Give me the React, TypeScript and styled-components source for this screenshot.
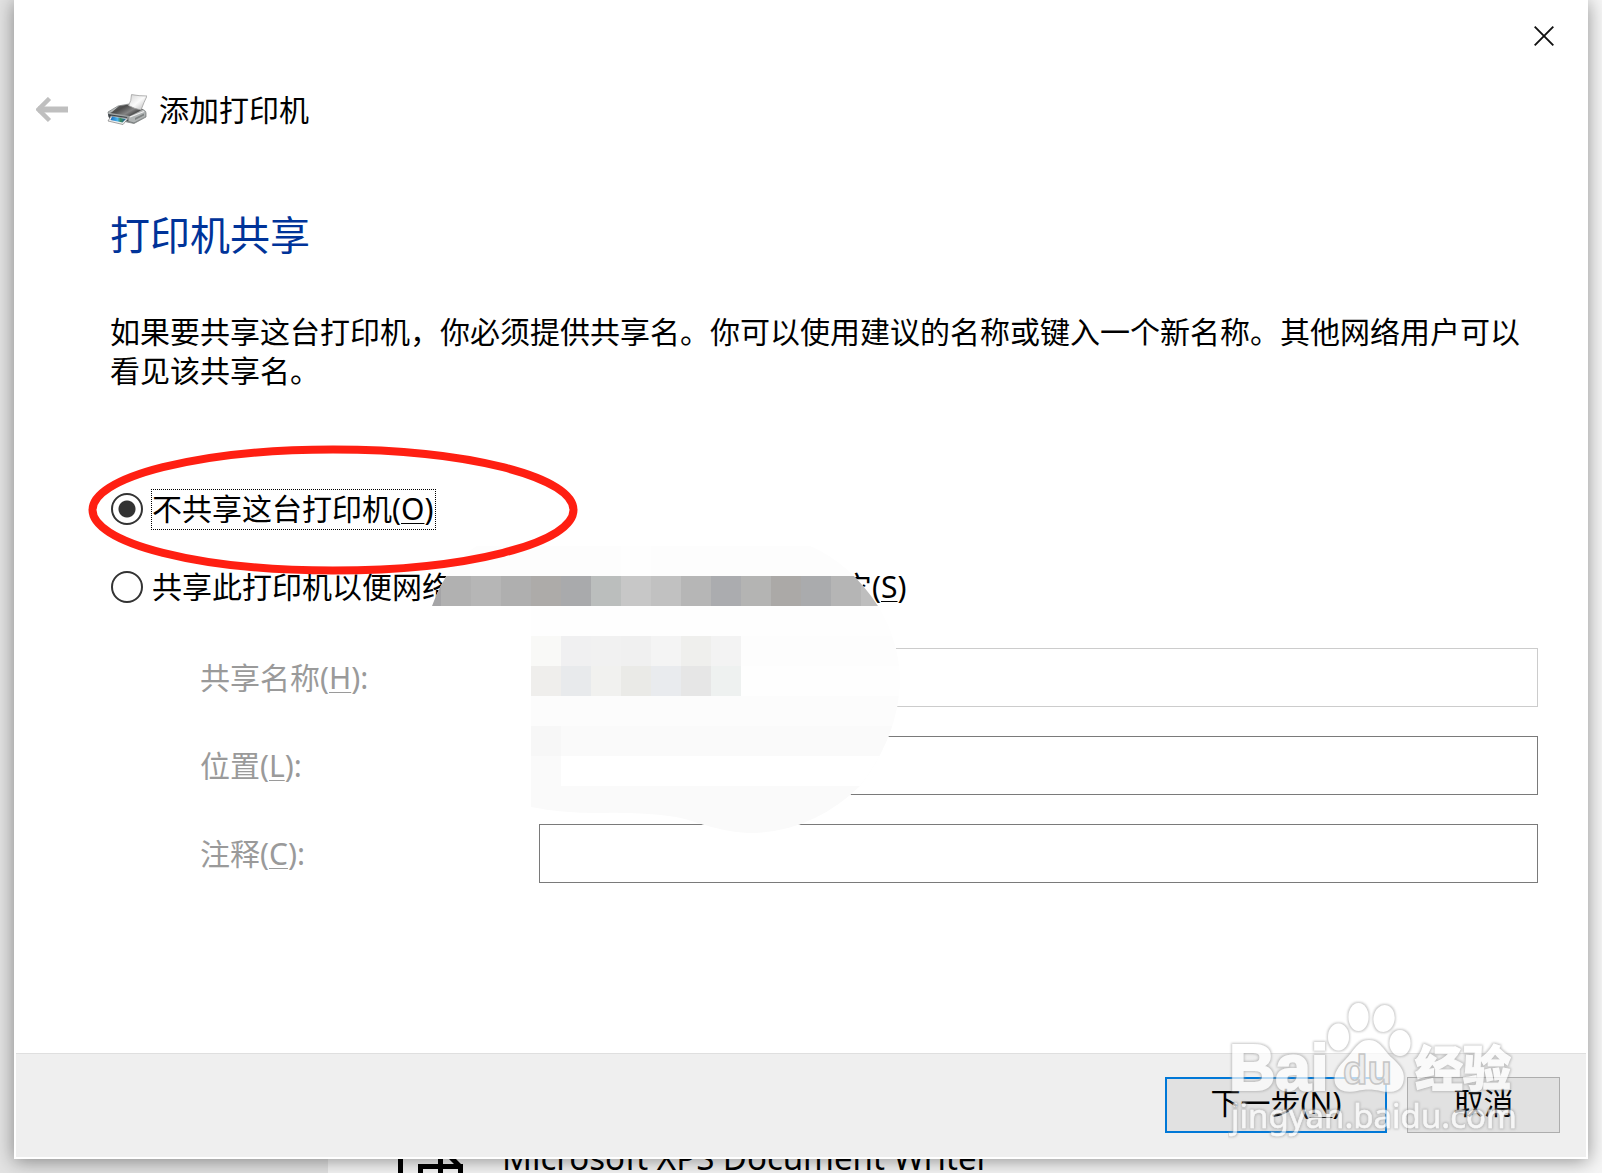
import React, { useState } from 'react';
import styled, { createGlobalStyle, css } from 'styled-components';

const GlobalStyle = createGlobalStyle`
  *, *::before, *::after { box-sizing: border-box; }
  body {
    margin: 0;
    background: #f6f6f6;
    color: #000;
    font-family: 'Noto Sans', 'Noto Sans CJK SC', sans-serif;
    font-size: 30px;
  }
  button, input { font: inherit; color: inherit; }
`;

const Desktop = styled.div`
  display: grid;
  height: 100vh;
  min-height: 900px;
  overflow: hidden;
`;

const Backdrop = styled.div`
  grid-area: 1 / 1;
  display: flex;
  min-height: 0;
`;

const Sidebar = styled.div`
  width: 328px;
  background: #e3e3e3;
`;

const DeviceList = styled.div`
  flex: 1;
  display: flex;
  align-items: flex-end;
  background: #f6f6f6;
`;

const Device = styled.div`
  display: flex;
  align-items: flex-end;
  gap: 38px;
  height: 36px;
  padding-left: 70px;
`;

const DeviceName = styled.span`
  height: 36px;
  font-size: 33px;
  line-height: 42px;
  white-space: nowrap;
`;

const Dialog = styled.main`
  grid-area: 1 / 1;
  position: relative;
  display: flex;
  flex-direction: column;
  margin: 0 14px 14px;
  background: #fff;
  box-shadow: 0 2px 18px rgba(0, 0, 0, 0.42);
`;

const CaptionBar = styled.div`
  display: flex;
  justify-content: flex-end;
`;

const IconButton = styled.button`
  display: flex;
  align-items: center;
  justify-content: center;
  padding: 0;
  border: 0;
  background: none;
`;

const CloseButton = styled(IconButton)`
  width: 88px;
  height: 72px;
`;

const TitleBar = styled.header`
  display: flex;
  align-items: center;
  height: 75px;
  padding-left: 22px;
`;

const TitleText = styled.span`
  margin-left: 12px;
  line-height: 40px;
`;

const PrinterArt = styled.svg`
  margin-left: 39px;
`;

const Content = styled.section`
  flex: 1;
  padding: 60px 50px 0 96px;
`;

const Heading = styled.h1`
  margin: 0;
  color: #003399;
  font-size: 40px;
  font-weight: 400;
  line-height: 56px;
`;

const Description = styled.p`
  margin: 49px 0 0;
  line-height: 39px;
`;

const Choices = styled.div`
  display: grid;
  gap: 38px;
  margin-top: 99px;
`;

const Choice = styled.div`
  display: flex;
  align-items: center;
  height: 40px;
`;

const Radio = styled.input`
  appearance: none;
  flex: none;
  width: 32px;
  height: 32px;
  margin: 0 8px 0 1px;
  border: 2px solid #333;
  border-radius: 50%;
  background: #fff;
  outline: 0;
  &:checked {
    background: radial-gradient(circle, #333 0 8px, #fff 9px);
  }
`;

const ChoiceLabel = styled.label<{ $focused?: boolean }>`
  height: 41px;
  padding-right: 2px;
  border: 1px dotted transparent;
  line-height: 38px;
  white-space: nowrap;
  ${(p) => p.$focused && css`border-color: #000;`}
`;

const Key = styled.span`
  text-decoration: underline;
  text-decoration-thickness: 1px;
  text-underline-offset: 3px;
`;

const Fields = styled.div`
  display: grid;
  gap: 29px;
  margin-top: 41px;
  padding-left: 90px;
`;

const Field = styled.div`
  display: grid;
  grid-template-columns: 339px 1fr;
  align-items: center;
`;

const FieldLabel = styled.label`
  color: #9a9a9a;
  line-height: 40px;
`;

const TextBox = styled.input`
  width: 100%;
  height: 59px;
  padding: 0 10px;
  border: 1px solid #7a7a7a;
  border-radius: 0;
  background: #fff;
  &:disabled { border-color: #ccc; }
`;

const Footer = styled.footer`
  display: flex;
  justify-content: flex-end;
  gap: 20px;
  margin: 0 2px 2px;
  padding: 23px 26px 24px;
  border-top: 1px solid #dfdfdf;
  background: #efefef;
`;

const PushButton = styled.button<{ $primary?: boolean }>`
  width: ${(p) => (p.$primary ? 222 : 153)}px;
  height: 56px;
  padding: 0 0 4px;
  border: ${(p) => (p.$primary ? '2px solid #0078d7' : '1px solid #adadad')};
  background: #e1e1e1;
  line-height: 40px;
`;

const Annotation = styled.svg`
  position: absolute;
  top: 0;
  left: 0;
  pointer-events: none;
`;

const Watermark = styled.svg`
  position: absolute;
  right: 60px;
  bottom: 15px;
  pointer-events: none;
`;

const BackIcon = () => (
  <svg width="32" height="26" viewBox="0 0 32 26" fill="none" stroke="#bfbfbf">
    <path d="M2 12.500H32" strokeWidth="6" />
    <path d="M13.500 1.500L2.500 12.500L13.500 23.500" strokeWidth="4.500" />
  </svg>
);

const CloseIcon = () => (
  <svg width="20" height="20" viewBox="0 0 20 20" stroke="#111" strokeWidth="1.900">
    <path d="M.7.700L19.300 19.300M19.300.700L.7 19.300" />
  </svg>
);

const PrinterIcon = () => (
  <PrinterArt width="40" height="31" viewBox="0 0 40 31">
    <defs>
      <linearGradient id="paper" x1="0" y1="0" x2="1" y2="1">
        <stop offset="0" stopColor="#d4d4d4" />
        <stop offset=".5" stopColor="#fbfbfb" />
        <stop offset="1" stopColor="#b4b4b4" />
      </linearGradient>
      <linearGradient id="lid" x1="0" y1="0" x2="1" y2=".6">
        <stop offset="0" stopColor="#6e6e6e" />
        <stop offset=".4" stopColor="#4c4c4c" />
        <stop offset=".7" stopColor="#858585" />
        <stop offset="1" stopColor="#2e2e2e" />
      </linearGradient>
      <linearGradient id="side" x1="0" y1="0" x2="0" y2="1">
        <stop offset="0" stopColor="#dcdede" />
        <stop offset="1" stopColor="#747979" />
      </linearGradient>
      <linearGradient id="photo" x1="0" y1="0" x2="1" y2="0">
        <stop offset="0" stopColor="#1666b8" />
        <stop offset=".45" stopColor="#49b4ee" />
        <stop offset=".65" stopColor="#3b8c5d" />
        <stop offset="1" stopColor="#1c5ca8" />
      </linearGradient>
    </defs>
    <path d="M1 18L11 12L22 10L37 16Q39 17 39 19V23L27 29.500L20 28L2 23Z" fill="url(#side)" stroke="#808484" strokeWidth=".8" />
    <path d="M5 18L12 12L22 10.500L36 15.500L23 22L3 19Z" fill="url(#lid)" />
    <path d="M24.500.600Q32 2 40 2Q37 8 34 16Q28 15 21.500 11.500Q24.500 7 24.500.600Z" fill="url(#paper)" stroke="#a0a0a0" strokeWidth=".8" />
    <path d="M22 23L38 16.500V22.500L27 28.500L22 27Z" fill="#b0b4b4" />
    <path d="M23 23L37 17.500" stroke="#f0f0f0" strokeWidth="1.200" />
    <path d="M28 24L37 19.500V21.500L28 26Z" fill="#7e8282" />
    <path d="M1 20L20 23L21 27L2 24Z" fill="#3b4248" />
    <path d="M4 22L21 24.500L16 30.500L1 27Z" fill="#f0f0f0" stroke="#8a8a8a" strokeWidth=".8" />
    <path d="M5 22.500L19 25L15.500 28.500L3.500 26Z" fill="url(#photo)" />
  </PrinterArt>
);

const GhostPrinter = () => (
  <svg width="66" height="14" viewBox="0 0 66 14" fill="#000">
    <path d="M0 0H5V14H0ZM20 5H65V14H60V10H25V14H20ZM40 0H45V14H40ZM51 0H58L64 6H57Z" />
  </svg>
);

const CELL = 30;
const textRow = ['#a5a5a7', '#b1b1b1', '#b6b6b6', '#afafaf', '#adaba9', '#a9aaac', '#bbbebd', '#c7c7c7', '#c1c1c1', '#b6b6b6', '#abacaf', '#b4b4b3', '#aba9a7', '#aaabad', '#b5b5b5', '#bebebe'];
const nameRows = [
  ['#f9f9f7', '#f0f0f1', '#f1f1f1', '#f0f0f0', '#f4f4f4', '#efefed', '#f3f3f3'],
  ['#efeeec', '#e8eaec', '#f1f1ef', '#eaeae7', '#e9ebee', '#e6e6e6', '#eef1f0'],
];

/* Pixelated patch over the private values, and the red ring round the first choice. */
const Markup = () => (
  <Annotation width="930" height="850" viewBox="14 0 930 850">
    <defs>
      <clipPath id="brush">
        <path d="M432 606Q448 562 477 546H810Q850 563 878 606Q899 640 900 680Q899 735 860 786Q815 830 755 833C720 833 700 822 676 817Q640 812 600 813Q560 813 531 807V606Z" />
      </clipPath>
    </defs>
    <g clipPath="url(#brush)" shapeRendering="crispEdges">
      <rect x="420" y="546" width="490" height="300" fill="#fefefe" />
      <rect x="420" y="546" width="201" height="30" fill="#fdfdfd" />
      <rect x="651" y="546" width="250" height="30" fill="#fdfdfd" />
      {textRow.map((fill, i) => (
        <rect key={i} x={411 + i * CELL} y="576" width={CELL} height={CELL} fill={fill} />
      ))}
      <rect x="741" y="636" width="170" height="30" fill="#fdfdfd" />
      {nameRows.map((row, r) =>
        row.map((fill, i) => (
          <rect key={`${r}-${i}`} x={531 + i * CELL} y={636 + r * CELL} width={CELL} height={CELL} fill={fill} />
        )),
      )}
      <rect x="531" y="696" width="380" height="30" fill="#fcfcfc" />
      <rect x="531" y="726" width="380" height="120" fill="#fafafa" />
      <rect x="531" y="726" width="30" height="30" fill="#f7f7f7" />
      <rect x="561" y="756" width="350" height="30" fill="#fff" />
    </g>
    <ellipse cx="333" cy="510" rx="240.500" ry="60.500" fill="none" stroke="#ff1f12" strokeWidth="8" />
  </Annotation>
);

const BaiduMark = () => (
  <Watermark width="300" height="150" viewBox="1228 994 300 150">
    <defs>
      <filter id="halo" x="-5%" y="-10%" width="110%" height="120%">
        <feMorphology in="SourceAlpha" operator="dilate" radius="1" result="wide" />
        <feGaussianBlur in="wide" stdDeviation=".8" result="soft" />
        <feFlood floodColor="#a0a0a0" floodOpacity=".8" />
        <feComposite in2="soft" operator="in" result="edge" />
        <feMerge>
          <feMergeNode in="edge" />
          <feMergeNode in="SourceGraphic" />
        </feMerge>
      </filter>
    </defs>
    <g filter="url(#halo)" opacity=".72" fill="#fff">
      <ellipse cx="1338.500" cy="1037" rx="10.500" ry="13.500" />
      <ellipse cx="1358.500" cy="1017" rx="10" ry="14" />
      <ellipse cx="1384" cy="1018.500" rx="10.500" ry="13.500" transform="rotate(8 1384 1019)" />
      <ellipse cx="1400" cy="1043" rx="10.500" ry="13" />
      <path d="M1369 1040C1380 1040 1384 1051 1392 1058C1401 1066 1406 1073 1403 1083C1400 1092 1391 1093 1381 1091C1373 1089 1364 1089 1357 1091C1346 1093 1338 1091 1335 1083C1333 1073 1339 1066 1346 1059C1354 1051 1358 1040 1369 1040Z" />
      <text x="1229" y="1090" fontFamily="Liberation Sans, sans-serif" fontWeight="700" fontSize="64" stroke="#fff" strokeWidth="2">Bai</text>
      <text x="1415" y="1086" fontFamily="Noto Sans CJK SC, sans-serif" fontWeight="900" fontSize="48" stroke="#fff" strokeWidth="1">经验</text>
    </g>
    <g filter="url(#halo)" opacity=".7" fill="#fff">
      <text x="1231" y="1128" fontFamily="Noto Sans, sans-serif" fontSize="33" stroke="#fff" strokeWidth=".5">jingyan.baidu.com</text>
    </g>
    <text x="1343" y="1084" fontFamily="Liberation Sans, sans-serif" fontWeight="700" fontSize="40" fill="#ededed" stroke="#c6c6c6" strokeWidth="1.500">du</text>
  </Watermark>
);

const FIELDS = [
  { id: 'share-name', text: '共享名称', hotkey: 'H', disabled: true },
  { id: 'location', text: '位置', hotkey: 'L', disabled: false },
  { id: 'comment', text: '注释', hotkey: 'C', disabled: false },
];

const CHOICES = [
  { id: 'no-share', text: '不共享这台打印机', hotkey: 'O' },
  { id: 'share', text: '共享此打印机以便网络中的其他用户可以找到并使用它', hotkey: 'S' },
];

export default function App() {
  const [choice, setChoice] = useState('no-share');

  return (
    <>
      <GlobalStyle />
      <Desktop>
        <Backdrop>
          <Sidebar />
          <DeviceList>
            <Device>
              <GhostPrinter />
              <DeviceName>Microsoft XPS Document Writer</DeviceName>
            </Device>
          </DeviceList>
        </Backdrop>
        <Dialog>
          <CaptionBar>
            <CloseButton type="button" aria-label="关闭"><CloseIcon /></CloseButton>
          </CaptionBar>
          <TitleBar>
            <IconButton type="button" aria-label="返回"><BackIcon /></IconButton>
            <PrinterIcon />
            <TitleText>添加打印机</TitleText>
          </TitleBar>
          <Content>
            <Heading>打印机共享</Heading>
            <Description>
              如果要共享这台打印机，你必须提供共享名。你可以使用建议的名称或键入一个新名称。其他网络用户可以看见该共享名。
            </Description>
            <Choices>
              {CHOICES.map((c) => (
                <Choice key={c.id}>
                  <Radio type="radio" name="sharing" id={c.id} checked={choice === c.id} onChange={() => setChoice(c.id)} />
                  <ChoiceLabel htmlFor={c.id} $focused={choice === c.id}>
                    {c.text}(<Key>{c.hotkey}</Key>)
                  </ChoiceLabel>
                </Choice>
              ))}
            </Choices>
            <Fields>
              {FIELDS.map((f) => (
                <Field key={f.id}>
                  <FieldLabel htmlFor={f.id}>{f.text}(<Key>{f.hotkey}</Key>):</FieldLabel>
                  <TextBox id={f.id} type="text" disabled={f.disabled} />
                </Field>
              ))}
            </Fields>
          </Content>
          <Footer>
            <PushButton type="button" $primary>下一步(<Key>N</Key>)</PushButton>
            <PushButton type="button">取消</PushButton>
          </Footer>
          <Markup />
          <BaiduMark />
        </Dialog>
      </Desktop>
    </>
  );
}
